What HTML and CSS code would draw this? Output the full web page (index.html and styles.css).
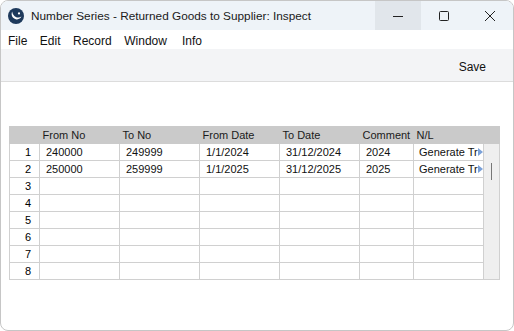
FILE: index.html
```html
<!DOCTYPE html>
<html lang="en">
<head>
    <meta charset="UTF-8">
    <title>Number Series - Returned Goods to Supplier: Inspect</title>
    <link rel="stylesheet" href="styles.css">
</head>
<body>
    <div class="window">
        <div class="titlebar">
            <svg class="app-icon" width="16" height="16" viewBox="0 0 16 16">
                <circle cx="8" cy="8" r="8" fill="#1e3a5c"/>
                <path d="M4.2 3.6 C2.6 6.6 4.4 11 8.6 11.4 C10.8 11.6 12.6 10.4 13.4 8.6 C12 9.6 10 9.9 8.3 9.2 C5.8 8.2 4.4 6 4.2 3.6 Z" fill="#ffffff"/>
                <circle cx="11" cy="5.4" r="1.1" fill="#ffffff"/>
            </svg>
            <span class="title">Number Series - Returned Goods to Supplier: Inspect</span>
            <div class="controls">
                <div class="ctl hover">
                    <svg width="12" height="12" viewBox="0 0 12 12"><path d="M1 6.5 H11" stroke="#222" stroke-width="1"/></svg>
                </div>
                <div class="ctl">
                    <svg width="12" height="12" viewBox="0 0 12 12"><rect x="1.5" y="1.5" width="9" height="9" rx="1" fill="none" stroke="#222" stroke-width="1"/></svg>
                </div>
                <div class="ctl">
                    <svg width="12" height="12" viewBox="0 0 12 12"><path d="M1 1 L11 11 M11 1 L1 11" stroke="#222" stroke-width="1"/></svg>
                </div>
            </div>
        </div>

        <div class="menubar">
            <span>File</span>
            <span>Edit</span>
            <span>Record</span>
            <span>Window</span>
            <span>Info</span>
        </div>

        <div class="toolbar">
            <span class="tool">Save</span>
        </div>

        <div class="content">
            <table class="matrix">
                <colgroup>
                    <col style="width:30px">
                    <col style="width:80px">
                    <col style="width:80px">
                    <col style="width:80px">
                    <col style="width:80px">
                    <col style="width:54px">
                    <col style="width:70px">
                    <col style="width:16px">
                </colgroup>
                <thead>
                    <tr>
                        <th></th>
                        <th>From No</th>
                        <th>To No</th>
                        <th>From Date</th>
                        <th>To Date</th>
                        <th>Comment</th>
                        <th>N/L</th>
                        <th></th>
                    </tr>
                </thead>
                <tbody>
                    <tr>
                        <td class="num">1</td>
                        <td>240000</td>
                        <td>249999</td>
                        <td>1/1/2024</td>
                        <td>31/12/2024</td>
                        <td>2024</td>
                        <td class="pick"><div class="pick-box"><span>Generate Tr</span><i class="arrow"></i></div></td>
                        <td class="scroll" rowspan="8"><div class="thumb"></div></td>
                    </tr>
                    <tr>
                        <td class="num">2</td>
                        <td>250000</td>
                        <td>259999</td>
                        <td>1/1/2025</td>
                        <td>31/12/2025</td>
                        <td>2025</td>
                        <td class="pick"><div class="pick-box"><span>Generate Tr</span><i class="arrow"></i></div></td>
                    </tr>
                    <tr><td class="num">3</td><td></td><td></td><td></td><td></td><td></td><td></td></tr>
                    <tr><td class="num">4</td><td></td><td></td><td></td><td></td><td></td><td></td></tr>
                    <tr><td class="num">5</td><td></td><td></td><td></td><td></td><td></td><td></td></tr>
                    <tr><td class="num">6</td><td></td><td></td><td></td><td></td><td></td><td></td></tr>
                    <tr><td class="num">7</td><td></td><td></td><td></td><td></td><td></td><td></td></tr>
                    <tr><td class="num">8</td><td></td><td></td><td></td><td></td><td></td><td></td></tr>
                </tbody>
            </table>
        </div>
    </div>
</body>
</html>
```

FILE: styles.css
```css
body {
    margin: 0;
    background: #ffffff;
    font-family: 'Liberation Sans', Arial, sans-serif;
    color: #111;
}

.window {
    width: 514px;
    height: 331px;
    box-sizing: border-box;
    border: 1px solid #c6c6c6;
    border-radius: 8px;
    overflow: hidden;
    display: flex;
    flex-direction: column;
    background: #fff;
}

/* title bar */
.titlebar {
    height: 29px;
    background: #eef3f8;
    display: flex;
    align-items: center;
}
.app-icon {
    margin-left: 7px;
    margin-right: 7px;
}
.title {
    font-size: 11.8px;
    color: #1a1a1a;
    flex: 1;
    white-space: nowrap;
}
.controls {
    display: flex;
    align-self: stretch;
}
.ctl {
    width: 46px;
    display: flex;
    align-items: center;
    justify-content: center;
}
.ctl.hover {
    background: #e1e6eb;
}

/* menu */
.menubar {
    height: 19px;
    display: flex;
    align-items: center;
    padding: 2px 0 0 7px;
    box-sizing: border-box;
    font-size: 12px;
    color: #111;
}
.menubar span {
    margin-right: 12.5px;
}
.menubar span:nth-child(4) {
    margin-right: 15px;
}

/* toolbar */
.toolbar {
    height: 33px;
    box-sizing: border-box;
    padding: 3px 27px 0 0;
    background: #f3f4f6;
    border-bottom: 1px solid #dcdcdc;
    display: flex;
    align-items: center;
    justify-content: flex-end;
}
.tool {
    font-size: 12px;
}

/* matrix */
.content {
    flex: 1;
    padding: 44px 0 0 8px;
}
.matrix {
    border-collapse: collapse;
    table-layout: fixed;
    width: 490px;
    font-size: 11px;
}
.matrix th {
    background: #cacaca;
    height: 16px;
    padding: 0 0 0 3px;
    text-align: left;
    font-weight: normal;
    color: #1a1a1a;
    white-space: nowrap;
    border: 1px solid #cacaca;
    border-left: none;
    border-right: none;
}
.matrix th:first-child {
    border-left: 1px solid #cacaca;
}
.matrix td {
    height: 16px;
    padding: 0 0 0 6px;
    border: 1px solid #d0d0d0;
    white-space: nowrap;
    overflow: hidden;
}
.matrix td.num {
    text-align: right;
    padding: 0 8px 0 0;
    color: #000;
}
.matrix td.pick {
    padding: 0 0 0 5px;
}
.pick-box {
    display: flex;
    align-items: center;
}
.pick-box span {
    flex: 1;
    white-space: nowrap;
}
.arrow {
    width: 0;
    height: 0;
    border-left: 5px solid #7ba1d8;
    border-top: 4px solid transparent;
    border-bottom: 4px solid transparent;
    margin-right: 1px;
}
.matrix td.scroll {
    background: #efefef;
    padding: 0;
    vertical-align: top;
    border-color: #d0d0d0;
}
.thumb {
    width: 1px;
    height: 17px;
    background: #777;
    margin: 19px 0 0 7px;
}
```
